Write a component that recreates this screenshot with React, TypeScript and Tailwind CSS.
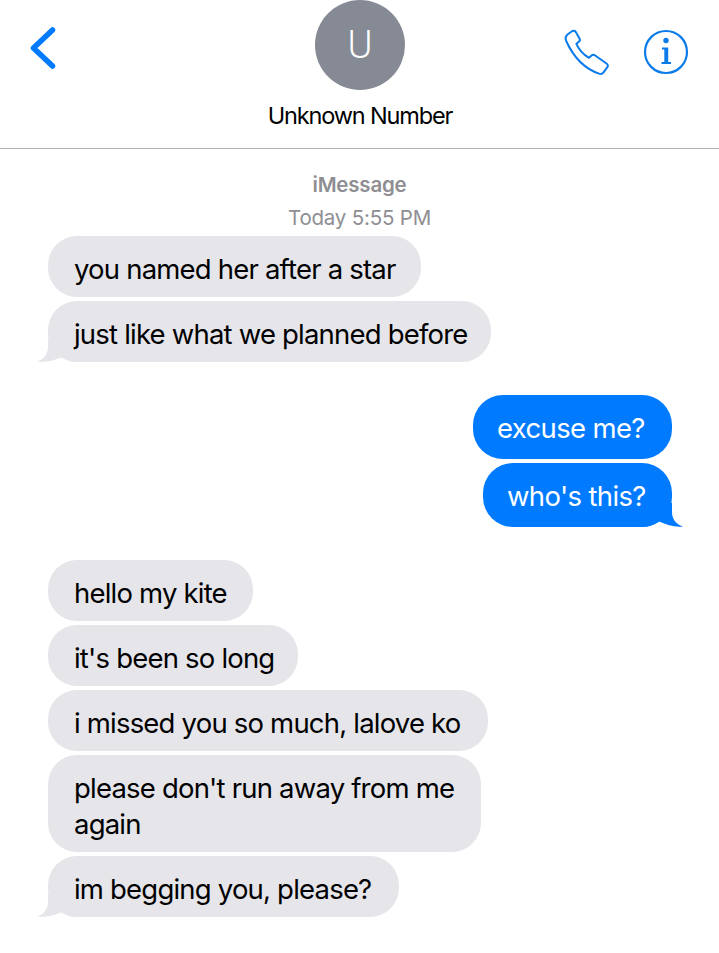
const font = "font-['Inter',sans-serif]"

const LeftTail = () => (
	<svg className="absolute left-[-11px] bottom-0 h-[24px] w-[40px]" viewBox="0 0 40 24">
		<path d="M11 0 L11 9 C11 15 8 21 0 23.5 C8 24.5 17 23 25 19 C29 22 34 24 40 24 L40 0 Z" fill="#e5e5ea" />
	</svg>
)

const RightTail = () => (
	<svg className="absolute right-[-11px] bottom-0 h-[24px] w-[40px]" viewBox="0 0 40 24">
		<path d="M29 0 L29 9 C29 15 32 21 40 23.5 C32 24.5 24 22 16 18.5 C12 21 6 24 0 24 L0 0 Z" fill="#007aff" />
	</svg>
)

const Incoming = ({text, tail, width}: {text: string; tail?: boolean; width: string}) => (
	<div className={`relative rounded-[29px] bg-[#e5e5ea] pl-[26px] pt-[15px] pb-[10px] whitespace-pre text-[27.5px] leading-[36px] tracking-[-0.8px] text-black ${width}`}>
		{tail && <LeftTail />}
		<span className="relative">{text}</span>
	</div>
)

const Outgoing = ({text, tail, width}: {text: string; tail?: boolean; width: string}) => (
	<div className={`relative rounded-[30px] bg-[#007aff] pl-[24px] pt-[15px] pb-[13px] whitespace-pre text-[27.5px] leading-[36px] tracking-[-0.65px] text-white ${width}`}>
		{tail && <RightTail />}
		<span className="relative">{text}</span>
	</div>
)

export default function App() {
	return (
		<div className={`h-[953px] w-[719px] overflow-hidden bg-white ${font}`}>
			<header className="grid h-[149px] grid-cols-[315px_90px_314px] border-b border-[#b2b2b2]">
				<div className="pl-[30px] pt-[27px]">
					<svg width="26" height="42" viewBox="0 0 26 42" fill="none">
						<path d="M22.5 3 L3.5 21 L22.5 39" stroke="#007aff" strokeWidth="5.5" strokeLinecap="round" strokeLinejoin="round" />
					</svg>
				</div>
				<div className="relative flex flex-col items-center">
					<div className="flex h-[90px] w-[90px] shrink-0 items-center justify-center rounded-full bg-[#868a94] font-['Roboto',sans-serif] text-[38px] font-light text-white">
						U
					</div>
					<p className="mt-[11px] whitespace-nowrap text-[23.5px] leading-[30px] tracking-[-1.15px] text-black">Unknown Number</p>
				</div>
				<div className="flex items-start justify-end gap-[33px] pr-[30px] pt-[29px]">
					<svg width="46" height="47" viewBox="0 0 46 47" fill="none">
						<path
							d="M3.5 5.5 L8 2.2 C9.5 1.2 11 1.6 11.8 3 L15.5 9.5 C16.2 10.8 15.9 12 14.8 12.8 L12.4 14.8 C14.5 20 19.5 25.5 25 28.8 L27.5 26.5 C28.5 25.6 29.7 25.5 30.8 26.2 L42.5 34.5 C44 35.6 44.3 37 43.2 38.4 L39.5 43.3 C38.3 44.9 36.8 45.3 35 44.6 C20 39.5 9 27 2.2 12 C1.2 9.5 1.7 7 3.5 5.5 Z"
							stroke="#0a7bea"
							strokeWidth="2"
							strokeLinejoin="round"
						/>
					</svg>
					<svg width="46" height="46" viewBox="0 0 46 46" fill="none">
						<circle cx="23" cy="23" r="21" stroke="#0a7bea" strokeWidth="2.2" />
						<circle cx="23" cy="11.5" r="2.7" fill="#0a7bea" />
						<path d="M19 18.5 H25.2 V33 H28 V35 H18.5 V33 H21.3 V20.5 H19 Z" fill="#0a7bea" />
					</svg>
				</div>
			</header>
			<main>
				<div className="flex flex-col items-center pt-[21px] text-[#8e8e93]">
					<p className="text-[20.5px] font-semibold leading-[30px] tracking-[-0.2px]">iMessage</p>
					<p className="mt-[3px] text-[20.5px] leading-[30px] tracking-[-0.2px]">Today 5:55 PM</p>
				</div>
				<div className="mt-[3px] flex flex-col items-start gap-[4px] pl-[48px]">
					<Incoming text="you named her after a star" width="w-[373px]" />
					<Incoming text="just like what we planned before" tail width="w-[443px]" />
				</div>
				<div className="mt-[33px] flex flex-col items-end gap-[4px] pr-[47px]">
					<Outgoing text="excuse me?" width="w-[199px]" />
					<Outgoing text="who's this?" tail width="w-[189px]" />
				</div>
				<div className="mt-[33px] flex flex-col items-start gap-[4px] pl-[48px]">
					<Incoming text="hello my kite" width="w-[205px]" />
					<Incoming text="it's been so long" width="w-[250px]" />
					<Incoming text="i missed you so much, lalove ko" width="w-[440px]" />
					<Incoming text={"please don't run away from me\nagain"} width="w-[433px]" />
					<Incoming text="im begging you, please?" tail width="w-[351px]" />
				</div>
			</main>
		</div>
	)
}
